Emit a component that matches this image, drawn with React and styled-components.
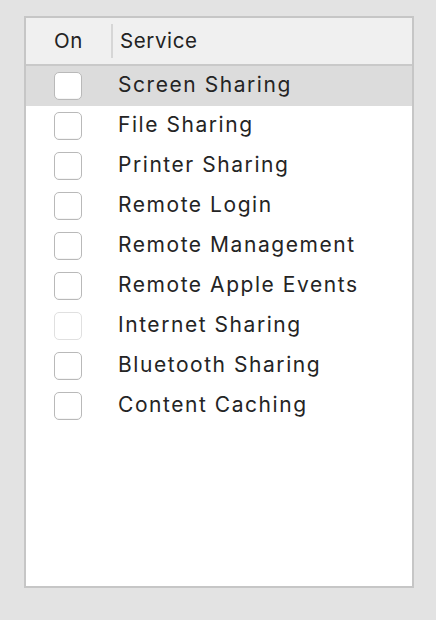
import React from "react";
import styled, { createGlobalStyle } from "styled-components";

const Global = createGlobalStyle`
  html, body { margin: 0; padding: 0; background: #e3e3e3; }
  body { font-family: Inter, "Liberation Sans", sans-serif; }
`;

const Page = styled.div`
  padding: 16px 22px 32px 24px;
`;

const Panel = styled.div`
  box-sizing: border-box;
  width: 390px;
  height: 572px;
  border: 2px solid #c6c6c6;
  background: #ffffff;
  display: flex;
  flex-direction: column;
`;

const Header = styled.div`
  height: 46px;
  background: #f0f0f0;
  border-bottom: 2px solid #c9c9c9;
  display: flex;
  align-items: center;
  padding-left: 28px;
  color: #222;
  font-size: 20.5px;
`;

const HeadCell = styled.div`
  width: ${(p) => p.$w || "auto"};
  display: flex;
  align-items: center;
  height: 34px;
  padding-left: ${(p) => p.$pl || 0}px;
  border-left: ${(p) => (p.$sep ? "2px solid #d6d6d6" : "none")};
  letter-spacing: 0.6px;
  padding-bottom: 2px;
  box-sizing: border-box;
`;

const List = styled.div`
  display: flex;
  flex-direction: column;
`;

const Row = styled.div`
  height: 40px;
  display: flex;
  align-items: center;
  padding-left: 28px;
  gap: 36px;
  background: ${(p) => (p.$selected ? "#dcdcdc" : "transparent")};
`;

const Box = styled.div`
  box-sizing: border-box;
  width: 28px;
  height: 28px;
  border-radius: 5px;
  background: #fff;
  border: 1px solid ${(p) => (p.$disabled ? "#e0e0e0" : "#b9b9b9")};
  box-shadow: ${(p) => (p.$disabled ? "none" : "inset 0 -1px 0 rgba(0,0,0,0.04)")};
`;

const Label = styled.div`
  font-size: 21px;
  color: #242424;
  letter-spacing: 1.55px;
  margin-top: -4px;
`;

const services = [
  "Screen Sharing",
  "File Sharing",
  "Printer Sharing",
  "Remote Login",
  "Remote Management",
  "Remote Apple Events",
  "Internet Sharing",
  "Bluetooth Sharing",
  "Content Caching",
];

export default function App() {
  return (
    <>
      <Global />
      <Page>
        <Panel>
          <Header>
            <HeadCell $w="57px">On</HeadCell>
            <HeadCell $sep $pl={7}>Service</HeadCell>
          </Header>
          <List>
            {services.map((s, i) => (
              <Row key={s} $selected={i === 0}>
                <Box $disabled={s === "Internet Sharing"} />
                <Label>{s}</Label>
              </Row>
            ))}
          </List>
        </Panel>
      </Page>
    </>
  );
}
